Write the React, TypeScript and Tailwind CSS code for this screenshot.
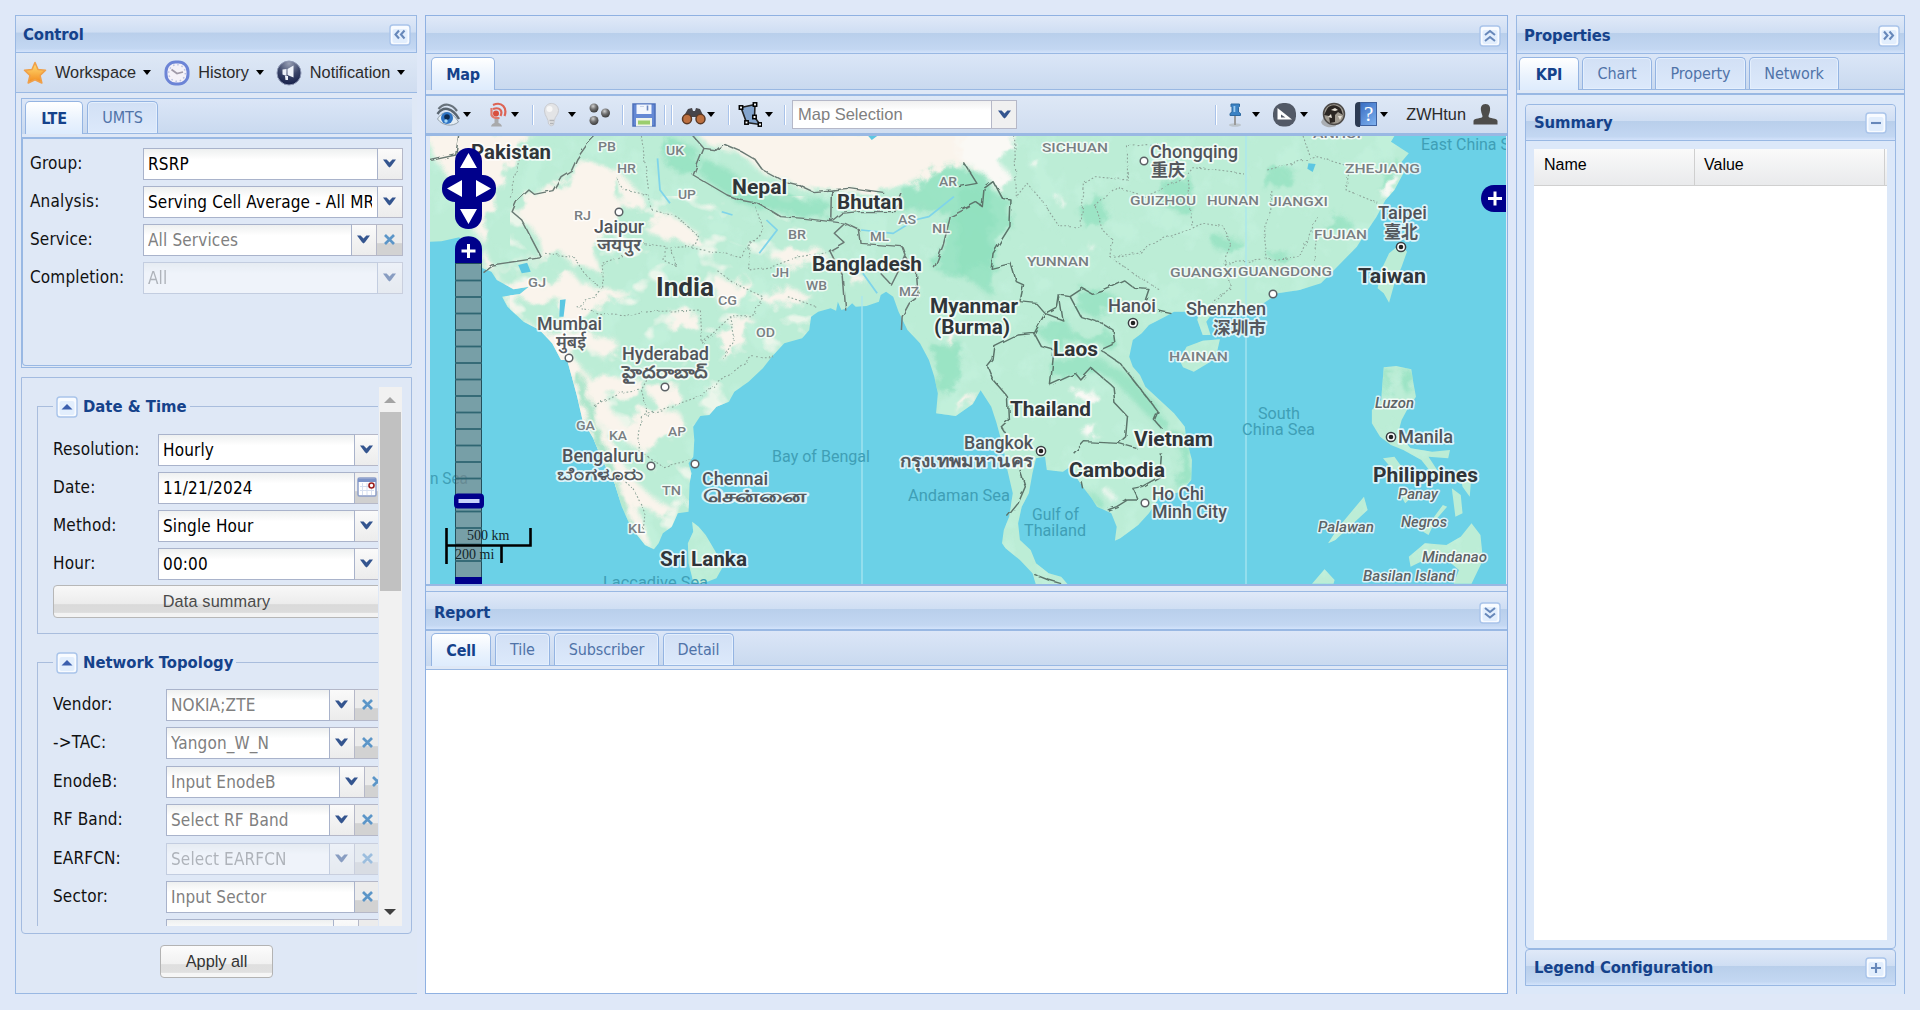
import React from "react";

const tahoma = "font-['DejaVu_Sans_Condensed','DejaVu_Sans',sans-serif]";
const arial = "font-['Liberation_Sans',Arial,sans-serif]";

function Caret() {
  return <span className="block h-0 w-0 shrink-0 border-x-[4.5px] border-t-[5px] border-x-transparent border-t-black" />;
}

function Chevron({ className = "" }: { className?: string }) {
  return (
    <svg width="13" height="9" viewBox="0 0 13 9" className={className}>
      <path d="M0 .5h3.6l2.9 3 2.9-3H13L8 7.3 6.5 8.5 5 7.3z" fill="#34558f" />
    </svg>
  );
}

function Tool({ kind }: { kind: "left" | "right" | "up" | "down" | "minus" | "plus" | "fold" }) {
  const paths: Record<string, React.ReactNode> = {
    left: <path d="M10 6.500 6.500 10.500l3.500 4M15.500 6.500 12 10.500l3.500 4" />,
    right: <path d="M6 6.500l3.500 4-3.500 4M11.500 6.500l3.500 4-3.500 4" />,
    up: <path d="M6 10l5-4 5 4M6 16l5-4 5 4" />,
    down: <path d="M6 6l5 4 5-4M6 11.500l5 4 5-4" />,
    minus: <path d="M6 11h10" />,
    plus: <path d="M6 11h10M11 6v10" />,
    fold: <path d="M5.500 13.500h11L11 8z" fill="#3b5fae" stroke="none" />,
  };
  return (
    <svg width="22" height="22" viewBox="0 0 22 22" className="shrink-0" fill="none" stroke="#6788ba" strokeWidth="2.1">
      <rect x="1" y="1" width="20" height="20" rx="3" fill="#f8fbff" stroke="#a9c4ea" strokeWidth="1.400" />
      <rect x="3.500" y="5" width="15" height="14" rx="2" fill="#e2eefd" stroke="none" />
      {paths[kind]}
    </svg>
  );
}

function Header({ title, tool, className = "" }: { title?: string; tool: React.ComponentProps<typeof Tool>["kind"]; className?: string }) {
  return (
    <div
      className={`flex shrink-0 items-center justify-between border border-[#99b8e3] bg-[linear-gradient(#e0e9f8_0%,#cfdef3_45%,#b9cfeb_47%,#c3d7f2_90%,#d3e3fb_100%)] ${className}`}
    >
      <span className={`${tahoma} pt-px text-[16.5px] font-bold tracking-[-0.1px] text-[#15428b]`}>{title}</span>
      <Tool kind={tool} />
    </div>
  );
}

function Tabs({ items, className = "", gap = "gap-[4px]" }: { items: { label: string; w: string }[]; className?: string; gap?: string }) {
  return (
    <div className={`shrink-0 bg-[linear-gradient(#dbe6f7,#c9d9ef)] ${className}`}>
      <div className={`flex h-full items-end border-b border-[#99b8e3] ${gap}`}>
        {items.map((t, i) => (
          <div
            key={t.label}
            className={`${tahoma} ${t.w} flex items-center justify-center rounded-t-[5px] border border-b-0 border-[#94b4e2] pt-px text-[16px] ${
              i === 0
                ? "relative top-px h-[33px] bg-[linear-gradient(#ffffff,#e9f2fd_60%,#deecfd)] font-bold tracking-[-0.2px] text-[#15428b]"
                : "h-[32px] bg-[linear-gradient(#d2e0f5,#dce9fb)] tracking-[-0.1px] text-[#5073a8] shadow-[inset_0_0_0_1px_#e4effd]"
            }`}
          >
            {t.label}
          </div>
        ))}
      </div>
    </div>
  );
}

function Clear() {
  return (
    <span className="flex h-8 w-[26px] shrink-0 items-start justify-center border-y border-r border-[#b5b8c8] bg-[linear-gradient(#ececec_60%,#d2d2d2_62%)] pr-px pt-[9px]">
      <svg width="11" height="11" viewBox="0 0 11 11" fill="none" stroke="#5c96c8" strokeWidth="2.700">
        <path d="M1 1l9 9M10 1l-9 9" />
      </svg>
    </span>
  );
}

function Calendar() {
  return (
    <span className="flex h-8 w-[26px] shrink-0 items-center border-y border-[#b5b8c8] bg-[linear-gradient(#efefef_60%,#d0d0d0_62%)] pb-[2px] pl-[2px]">
      <svg width="20" height="20" viewBox="0 0 20 20">
        <rect x="1" y="1" width="18" height="18" rx="1.500" fill="#fff" stroke="#8d9fc9" strokeWidth="1.500" />
        <path d="M1 1.500h18V5H1z" fill="#7c93c8" />
        <path d="M3 9.500h14M3 13.500h14M5.500 6v12M10 6v12M14.500 6v12" stroke="#d6dff0" />
        <circle cx="14.500" cy="8.500" r="2.500" fill="#fff" stroke="#9c1f1f" strokeWidth="1.600" />
      </svg>
    </span>
  );
}

type Field = {
  label: string;
  value: string;
  w: string;
  lw: string;
  muted?: boolean;
  disabled?: boolean;
  arrow?: boolean;
  clear?: boolean;
  calendar?: boolean;
  mb?: string;
};

function Row({ label, value, w, lw, muted, disabled, arrow = true, clear, calendar, mb = "mb-[6px]" }: Field) {
  return (
    <div className={`${tahoma} ${mb} flex h-8 items-center text-[17px] tracking-[0.15px]`}>
      <span className={`${lw} shrink-0 text-[#111]`}>{label}</span>
      <div className={`flex ${disabled ? "opacity-50" : ""}`}>
        <div
          className={`${w} h-8 shrink-0 border border-[#a9b3cb] bg-[linear-gradient(#eef0f0,#ffffff_35%)] pl-[4px] pr-[5px] leading-[30px] ${
            muted ? "text-[#808080]" : "text-black"
          }`}
        >
          <span className="block overflow-hidden whitespace-nowrap">{value || "\u00a0"}</span>
        </div>
        {arrow && !calendar && (
          <span className="flex h-8 w-[25px] shrink-0 items-center justify-center border-y border-r border-[#b5b8c8] bg-[linear-gradient(#fafafa,#ececec)] pb-px pr-px">
            <Chevron />
          </span>
        )}
        {calendar && <Calendar />}
        {clear && <Clear />}
      </div>
    </div>
  );
}

function Fieldset({ title, className, children }: { title: string; className: string; children: React.ReactNode }) {
  return (
    <div className={`relative shrink-0 border border-r-0 border-[#a9bddd] pl-[15px] ${className}`}>
      <div className="absolute -top-[11px] left-[15px] flex items-center gap-[5px] bg-[#dfe8f6] px-[3px]">
        <Tool kind="fold" />
        <span className={`${tahoma} text-[16.5px] font-bold leading-[22px] text-[#15428b]`}>{title}</span>
      </div>
      {children}
    </div>
  );
}

function Star() {
  return (
    <svg width="24" height="24" viewBox="0 0 24 24">
      <defs>
        <linearGradient id="star" x1="0" y1="0" x2="0" y2="1">
          <stop offset="0" stopColor="#ffe27a" />
          <stop offset="1" stopColor="#f38a1d" />
        </linearGradient>
      </defs>
      <path d="M12 1.500l3 7 7.500.7-5.500 5.300 1.800 7.500-6.800-3.300L5.200 22 7 14.500 1.500 9.200 9 8.500z" fill="url(#star)" stroke="#efa04a" strokeWidth="1.600" strokeLinejoin="round" />
    </svg>
  );
}

function Clock() {
  return (
    <svg width="26" height="26" viewBox="0 0 26 26">
      <rect x="2" y="2" width="22" height="22" rx="9.500" fill="#f4f1f8" stroke="#6c84d6" strokeWidth="3" />
      <circle cx="13" cy="13" r="8.300" fill="none" stroke="#b9c0e0" strokeDasharray="1.500 2.850" strokeWidth="1.500" />
      <path d="M7.500 9.500l5.500 4 6-1.500" fill="none" stroke="#a09aa8" strokeWidth="1.800" />
    </svg>
  );
}

function Horn() {
  return (
    <svg width="26" height="26" viewBox="0 0 26 26">
      <defs>
        <radialGradient id="horn" cx=".5" cy=".1" r=".9">
          <stop offset="0" stopColor="#98a0b5" />
          <stop offset=".55" stopColor="#3a4468" />
          <stop offset="1" stopColor="#16204a" />
        </radialGradient>
      </defs>
      <circle cx="13" cy="13" r="12" fill="url(#horn)" stroke="#8f99b5" />
      <path d="M6.500 9.500l4-.5v7l-4-1.500zM11.500 9l6-3.500v12L11.500 15zM9 16h3v4H9.500z" fill="#eef2fa" />
    </svg>
  );
}

function MenuItem({ icon, label, className = "" }: { icon: React.ReactNode; label: string; className?: string }) {
  return (
    <div className={`flex items-center ${className}`}>
      {icon}
      <span className={`${arial} ml-[8px] mr-[7px] text-[16.300px] text-[#2b2b2b]`}>{label}</span>
      <Caret />
    </div>
  );
}

const iconSvg = { width: 26, height: 26, viewBox: "0 0 26 26" };

function Eye() {
  return (
    <svg {...iconSvg} fill="none">
      <path d="M2.500 7C8 0 16 2 21 9" stroke="#68727c" strokeWidth="2.200" />
      <path d="M1.500 12C7 4 16 5 23 17" stroke="#5a6570" strokeWidth="2.400" />
      <path d="M1.500 17c5-9 14-9 21 3-6 5-16 4-21-3z" fill="#e4edf4" stroke="#93a0ab" />
      <circle cx="11" cy="16" r="6" fill="#2f74c4" />
      <circle cx="11" cy="15" r="2.800" fill="#0e2a50" />
      <circle cx="10" cy="19" r="1.700" fill="#a9daf7" />
    </svg>
  );
}

function Antenna() {
  return (
    <svg {...iconSvg} fill="none">
      <path d="M6 3c9-4 14.500 3 11.500 11M6 7c7-2.500 10 2 7.500 7" stroke="#dd6455" strokeWidth="2.200" />
      <circle cx="9" cy="11.500" r="3" fill="#d8503f" />
      <path d="M4.500 6v7c1 2 4 3.500 8 3" stroke="#e07a6c" strokeWidth="2.200" />
      <path d="M7.500 17h4v4c2 .5 3 1.500 3.500 3.500H4C4.500 22.500 5.500 21.500 7.500 21z" fill="#a9aaac" />
    </svg>
  );
}

function Bulb() {
  return (
    <svg {...iconSvg}>
      <path d="M3.500 9C3.500-1 17-1 17.500 8.500c0 4-3.500 6-4 9.500l-1 5-2.500 1-2.500-2C8 17 3.500 14 3.500 9z" fill="#e3e4e6" stroke="#c9cbd0" />
      <circle cx="8.500" cy="7" r="3" fill="#f7f7f7" />
      <path d="M8.500 18.500h4.500M9 21.500h3.500" stroke="#b2b4b8" strokeWidth="1.500" />
    </svg>
  );
}

function Balls() {
  return (
    <svg {...iconSvg}>
      <defs>
        <radialGradient id="ball" cx=".4" cy=".3" r=".7">
          <stop offset="0" stopColor="#d0d0d0" />
          <stop offset=".5" stopColor="#707070" />
          <stop offset="1" stopColor="#3c3c3c" />
        </radialGradient>
      </defs>
      <circle cx="8" cy="6" r="4.500" fill="url(#ball)" />
      <circle cx="19.500" cy="11" r="4.500" fill="url(#ball)" />
      <circle cx="8" cy="18.500" r="4.500" fill="url(#ball)" />
    </svg>
  );
}

function Floppy() {
  return (
    <svg {...iconSvg}>
      <rect x="2" y="2" width="22" height="22" fill="#6488d4" stroke="#4e70ba" strokeWidth="1.500" />
      <rect x="5.500" y="2.500" width="15" height="9.500" fill="#f2f6fd" />
      <path d="M16.500 3.500v5" stroke="#6a86c0" strokeWidth="1.600" />
      <path d="M9 4.500h4" stroke="#c9d3e8" />
      <rect x="5" y="16" width="16" height="8.500" fill="#eef3ea" />
      <path d="M7 18.500h12v4H7z" fill="#9bce6e" />
    </svg>
  );
}

function Binoculars() {
  return (
    <svg {...iconSvg}>
      <path d="M7 7l4-1 1 3h2l1-3 4 1 5 10-7 2-2-4h-4l-3 4-7-2z" fill="#46444a" />
      <ellipse cx="6" cy="17" rx="4.500" ry="4.700" fill="#bd7040" stroke="#5b3a26" strokeWidth="1.500" />
      <ellipse cx="19.500" cy="17" rx="4.500" ry="4.700" fill="#bd7040" stroke="#5b3a26" strokeWidth="1.500" />
    </svg>
  );
}

function Polygon() {
  return (
    <svg width="26" height="26" viewBox="0 0 26 26">
      <path d="M5 5.500L19 2.500l-.5 12.500L24 22.500 10.500 20.500z" fill="#84a5ce" stroke="#222" strokeWidth="1.600" />
      {[[5, 5.5], [19, 2.5], [18.5, 15], [24, 22.5], [10.5, 20.5]].map(([x, y]) => (
        <rect key={x} x={x - 1.7} y={y - 1.7} width="3.400" height="3.400" fill="#fff" stroke="#000" strokeWidth="1.500" />
      ))}
    </svg>
  );
}

function Pin() {
  return (
    <svg {...iconSvg}>
      <ellipse cx="13" cy="23" rx="6" ry="1.800" fill="#bcc5cc" />
      <path d="M12 13h2v10h-2z" fill="#9a9a9a" />
      <path d="M9 2h8.500v2.500l-1 1v4.500l2 1.500v2H8V11.500L10 10V5.500l-1-1z" fill="#3b82c4" stroke="#2c689f" />
      <path d="M11.500 4h1.800v6h-1.800z" fill="#9ccbf0" />
    </svg>
  );
}

function Ruler() {
  return (
    <svg {...iconSvg}>
      <rect x="1" y="1" width="23" height="23.500" rx="10" fill="#525966" />
      <path d="M5.500 6v11.500H20zM9 12.500l4.500 3H9z" fill="#fff" fillRule="evenodd" />
    </svg>
  );
}

function Globe() {
  return (
    <svg {...iconSvg}>
      <path d="M1 20c2 6 11 6 15 4l2-7L4 15z" fill="#aaaeb3" />
      <circle cx="14" cy="12" r="10.500" fill="#a09a90" stroke="#4d4a48" strokeWidth="1.500" />
      <path d="M7 7c3-5 10-5 14 0l2 6-5-3-3 3v7l-5 1-1-7-5-1z" fill="#2b2623" />
      <path d="M11 8l4-2 3 2-3 1zM8 15l3-3 1 4zM18 14l4 0-2 4z" fill="#e6e1d6" />
    </svg>
  );
}

function Help() {
  return (
    <div className="flex h-[25px] w-[22px]">
      <span className="h-[25px] w-[5px] rounded-l-sm bg-[#2d3b52]" />
      <span className="flex h-[24px] w-[17px] items-center justify-center border border-[#3f62a0] bg-[linear-gradient(135deg,#3a6fc4,#7fb1ee)] font-['Liberation_Serif',serif] text-[21px] leading-none text-white">
        ?
      </span>
    </div>
  );
}

function User() {
  return (
    <svg width="26" height="24" viewBox="0 0 26 24">
      <path d="M12.500 1c4 0 5 3 4.500 6.500-.3 3-1.500 4-1.500 6 .3 2 9 1.500 9 4.500v3.500H.5V18c0-3 9-2.500 9-4.500 0-2-1.200-3-1.500-6C7.500 4 8.500 1 12.500 1z" fill="#4e4d4b" />
    </svg>
  );
}

function Sep({ className = "" }: { className?: string }) {
  return <span className={`h-[20px] w-[2px] shrink-0 border-l border-[#a9c3ea] bg-white ${className}`} />;
}

const WEST =
  "M0 336L60 334 110 322 175 415 200 425 215 450 262 478 305 470 280 492 230 500 245 530 290 575 335 600 370 640 395 690 412 690 425 740 440 800 455 870 485 925 510 990 545 1060 565 1130 590 1190 630 1245 655 1258 668 1240 680 1210 705 1190 722 1150 752 1145 755 1060 760 1030 752 1000 765 980 768 930 765 890 785 858 810 855 830 830 865 815 880 785 920 755 960 715 985 680 1020 640 1070 625 1090 600 1095 560 1115 545 1150 535 1165 542 1170 515 1180 540 1195 535 1210 520 1220 530 1250 528 1285 515 1290 495 1305 485 1325 500 1340 545 1365 600 1400 640 1425 690 1440 740 1450 790 1445 850 1500 858 1548 822 1570 780 1600 780 1600 0 0 0zM762 1175L780 1190 800 1215 830 1270 848 1310 830 1345 790 1361 765 1355 752 1300 750 1240 765 1205z";
const EAST =
  "M0 0L1225 0 1205 35 1255 70 1235 95 1240 130 1215 180 1190 210 1165 260 1140 300 1110 350 1065 400 1010 460 950 480 890 490 850 520 800 540 740 540 700 560 690 575 702 615 680 615 665 570 670 545 600 545 575 560 530 585 510 610 485 630 475 680 485 710 505 735 520 770 560 810 600 850 630 890 635 930 650 990 648 1050 620 1085 560 1100 530 1150 500 1185 450 1225 435 1232 440 1190 425 1150 385 1130 370 1105 345 1070 320 1030 310 1010 290 1025 245 1020 240 980 215 985 205 1030 195 1090 175 1130 165 1180 170 1230 200 1260 215 1300 250 1330 285 1340 305 1365 215 1365 205 1330 170 1290 130 1255 120 1240 125 1200 140 1160 150 1090 135 1020 125 960 105 880 90 830 60 780 35 820 0 830zM615 690L635 650 680 632 728 628 720 665 695 700 655 725 625 712zM1232 342L1250 365 1235 410 1215 460 1200 518 1185 490 1168 475 1178 420 1200 370zM1185 712L1220 708 1262 718 1268 760 1275 800 1250 840 1235 870 1225 910 1260 955 1320 965 1370 960 1365 985 1310 980 1340 1030 1330 1045 1290 990 1240 960 1205 945 1175 920 1152 880 1152 840 1178 810zM1183 985L1215 980 1235 1010 1215 1025zM1130 1100L1140 1140 1105 1175 1050 1230 1030 1240 1060 1190zM1225 1080L1275 1090 1245 1120zM1350 1125L1362 1130 1330 1170 1310 1215 1295 1205zM1375 1075L1400 1095 1405 1150 1385 1160zM1395 1020L1430 1035 1425 1100 1405 1070zM1430 1180L1455 1215 1462 1290 1430 1361 1380 1361 1395 1320 1340 1270 1280 1300 1260 1310 1255 1280 1300 1240 1360 1245 1400 1220zM985 1361L1020 1318 1048 1350 1045 1361z";

const SAND =
  "M0 0L300 0 250 120 200 230 170 300 180 415 210 420 300 395 340 380 330 330 300 280 260 240 300 185 380 180 440 90 520 110 560 120 540 190 580 230 540 290 480 350 510 430 420 400 400 370 300 400 210 425 220 455 270 475 300 440 340 470 420 420 450 460 500 480 600 490 500 530 480 560 430 600 390 560 400 510 330 520 230 500 260 540 330 600 390 600 480 610 560 640 520 690 450 640 410 650 470 740 560 740 640 760 600 800 500 810 490 760 560 880 640 830 730 850 740 890 690 940 620 960 560 930 500 880 460 890 460 850 520 900 600 1050 650 1100 720 1140 660 1150 600 1120 650 1250 620 1235 600 1190zM545 110L600 170 640 220 580 240zM640 270L700 250 780 310 780 350 690 330 640 310zM820 430L880 460 930 450 900 520 840 530zM930 500L1030 470 1100 500 1030 525 970 515zM860 570L930 560 900 640 840 690zM970 380L1100 350 1150 380 1040 410zM640 780L720 760 730 820 660 840zM680 560L770 540 760 590 700 600zM770 0L1600 0 1600 90 1480 110 1350 170 1240 190 1100 185 960 130 900 70 800 40zM1210 430L1250 440 1220 480zM1480 560L1510 600 1490 660 1475 640zM1500 850L1560 780 1545 830z";

const DARK =
  "M1360 185L1440 120 1530 110 1600 140 1600 500 1540 450 1440 420 1465 340 1480 240 1420 245 1330 240zM780 80L850 110 950 190 1140 210 1140 265 1000 250 880 210 790 140zM700 18L780 60 770 130 700 120 670 60zM1440 640L1520 640 1500 780 1450 790zM430 740L445 720 520 960 600 1200 560 1120 500 980z";
const DARK_E =
  "M0 190L70 170 140 210 145 290 90 380 95 415 60 400 20 440 0 440zM320 490L400 470 460 520 380 560 330 540zM210 600L290 560 330 620 420 600 440 650 380 640 250 640zM260 690L380 680 470 730 560 830 570 900 520 850 430 750 380 720 260 750zM860 130L930 110 920 160 850 175zM1180 110L1230 90 1225 160 1180 190zM1000 290L1060 250 1110 290 1050 300zM860 380L920 360 900 400zM590 150L640 130 650 250 560 230zM330 240L400 200 420 260 350 290zM700 320L790 330 780 380 720 360zM1190 715L1205 715 1195 800 1185 790zM1225 715L1262 720 1265 800 1240 780zM590 900L640 920 640 1060 600 1070 620 980zM320 1080L390 1100 400 1130 350 1100z";
const WHITE_E =
  "M0 0L150 0 155 60 110 90 150 150 100 175 60 120 20 100 0 80zM265 195L290 205 275 220zM200 90L225 95 215 120zM325 780L385 790 380 820 330 810zM350 885L390 890 365 925 345 910zM365 345L385 355 370 365zM1220 135L1235 155 1200 205 1178 200 1190 170zM410 1085L440 1095 420 1110z";
const BORDERS_W =
  "M28 92L100 75 108 18M175 425L200 405 340 383 285 270 258 245 270 215 305 180 320 193 372 182 395 140 425 120 440 85 470 40 490 18M765 18L795 55 765 135 860 195 895 210 945 220 980 240 1010 260 1075 265 1150 275 1152 180 1100 185 1060 165 1020 155 960 120 940 90 900 65 850 42 830 60 795 55M1152 275L1190 280 1160 310 1190 340 1150 365 1185 440 1192 542M1190 280L1230 300 1235 340 1350 350 1360 380 1320 465 1290 430M1150 275L1180 250 1230 245 1330 245 1350 190M1360 380L1390 430 1395 500 1370 520 1350 560 1348 600M1440 415L1465 345 1485 260 1540 230M1152 180L1200 175 1300 190";
const BORDERS_E =
  "M0 240L45 215 65 230 70 175 95 155 120 205 145 210 142 290 95 370 90 415 145 400 160 455 180 465 170 515 215 520 240 550 275 530 280 495 310 500 345 475 370 490 400 480 460 450 490 475 530 478 520 510M310 500L340 560 400 580 430 600 435 640 395 660 450 700 530 810 555 845 545 870 565 895M240 550L290 570 280 500M240 550L210 610 165 615 100 650 95 690 80 710 95 750 135 800 138 870 118 890 130 910M210 610L230 650 265 660 255 765 325 730 340 750 370 715 430 770 435 820 470 860 465 920 445 940 350 935 320 970M445 940L495 955M565 970L560 1040 510 1070 485 1075 500 1110 470 1110 440 1130 415 1140M170 1020L185 1070 165 1120 135 1160M340 1050L345 1075M555 540L590 548M210 1333L250 1350 285 1361M15 100L50 160 0 170";
const STATES_W =
  "M545 140L570 180 640 195 650 240 720 260 780 320 770 345 700 350 720 410 680 390 690 350 620 340 560 380 510 400 515 480 440 530 500 550 590 555 640 545 785 540 790 640M790 640L870 560 930 560 960 500 880 460 830 420M940 230L960 300 925 340 920 420 985 410 1060 380 1160 365M870 560L880 620 850 690M640 860L620 780 640 740M490 830L560 790 620 780M620 860L780 800 860 740 930 680 990 680M620 860L610 960 680 1010 760 990M560 1040L600 1080 630 1150 625 1200M350 370L430 380 460 430 490 460 515 480M250 200L280 80M620 18L640 180M1030 500L1110 530M740 350L900 380 960 300";
const STATES_E =
  "M155 18L160 200 190 160 230 210 280 290 340 290 350 160 380 140 470 150 470 50 560 40M380 230L440 170 520 200 620 150 650 110 800 130M380 230L400 300 430 330 420 380 500 370 560 330 640 300 680 280 740 290 760 350 740 400 850 390M640 150L650 290M870 180L870 240 850 300 860 390 950 380 1000 260M860 120L1000 80 1090 110 1080 180 1170 220M960 18L980 80M740 400L760 470 710 520M420 380L500 440 560 480M990 390L1000 300";

type Label = [string, number, number, number, ("c" | "t" | "n" | "p" | "s" | "i" | "big")?];
/* text, left, baseline, width, style */
const LABELS: Label[] = [
  ["Pakistan", 41, 23, 80, "c"], ["Nepal", 302, 58, 55, "c"], ["Bhutan", 407, 73, 66, "c"],
  ["Bangladesh", 382, 135, 110, "c"], ["India", 226, 160, 58, "big"], ["Myanmar", 500, 177, 88, "c"],
  ["(Burma)", 504, 198, 76, "c"], ["Sri Lanka", 230, 430, 87, "c"], ["Laos", 623, 220, 45, "c"],
  ["Thailand", 580, 280, 81, "c"], ["Vietnam", 704, 310, 79, "c"], ["Cambodia", 639, 341, 96, "c"],
  ["Taiwan", 928, 147, 68, "c"], ["Philippines", 943, 346, 105, "c"],
  ["Jaipur", 164, 97, 50, "t"], ["जयपुर", 167, 115, 44, "n"], ["Mumbai", 107, 194, 65, "t"], ["मुंबई", 126, 212, 30, "n"],
  ["Hyderabad", 192, 224, 87, "t"], ["హైదరాబాద్", 192, 242, 86, "n"], ["Bengaluru", 132, 326, 82, "t"],
  ["ಬೆಂಗಳೂರು", 127, 344, 86, "n"], ["Chennai", 272, 349, 66, "t"], ["சென்னை", 273, 366, 103, "n"],
  ["Bangkok", 534, 313, 69, "t"], ["กรุงเทพมหานคร", 470, 331, 133, "n"], ["Chongqing", 720, 22, 88, "t"],
  ["重庆", 721, 40, 34, "n"], ["Taipei", 948, 83, 49, "t"], ["臺北", 954, 102, 34, "n"], ["Hanoi", 678, 176, 48, "t"],
  ["Shenzhen", 756, 179, 80, "t"], ["深圳市", 783, 198, 53, "n"], ["Manila", 968, 307, 55, "t"],
  ["Ho Chi", 722, 364, 52, "t"], ["Minh City", 722, 382, 75, "t"],
  ["PB", 168, 15, 18, "p"], ["UK", 236, 19, 18, "p"], ["HR", 187, 37, 19, "p"], ["UP", 248, 63, 18, "p"], ["AR", 509, 50, 18, "p"],
  ["RJ", 144, 84, 17, "p"], ["BR", 358, 103, 18, "p"], ["ML", 440, 105, 19, "p"], ["AS", 468, 88, 18, "p"], ["NL", 502, 97, 18, "p"],
  ["CG", 288, 169, 19, "p"], ["JH", 342, 141, 17, "p"], ["WB", 376, 154, 21, "p"], ["MZ", 469, 160, 20, "p"], ["GJ", 98, 151, 18, "p"],
  ["OD", 326, 201, 19, "p"], ["GA", 146, 294, 19, "p"], ["KA", 179, 304, 18, "p"], ["AP", 238, 300, 18, "p"], ["TN", 232, 359, 19, "p"],
  ["KL", 198, 397, 17, "p"], ["SICHUAN", 612, 16, 66, "p"], ["ANHUI", 883, 2, 48, "p"], ["ZHEJIANG", 915, 37, 75, "p"],
  ["GUIZHOU", 700, 69, 66, "p"], ["HUNAN", 777, 69, 52, "p"], ["JIANGXI", 839, 70, 59, "p"], ["FUJIAN", 884, 103, 53, "p"],
  ["YUNNAN", 597, 130, 62, "p"], ["GUANGXI", 740, 141, 67, "p"], ["GUANGDONG", 808, 140, 94, "p"], ["HAINAN", 739, 225, 59, "p"],
  ["Laccadive Sea", 173, 452, 105, "s"], ["Bay of Bengal", 342, 326, 98, "s"], ["Andaman Sea", 478, 365, 102, "s"],
  ["n Sea", 0, 348, 38, "s"], ["South", 828, 283, 42, "s"], ["China Sea", 812, 299, 73, "s"], ["Gulf of", 602, 384, 47, "s"],
  ["Thailand", 594, 400, 62, "s"], ["East China Sea", 991, 14, 106, "s"],
  ["Luzon", 945, 272, 39, "i"], ["Panay", 968, 363, 40, "i"], ["Negros", 971, 391, 46, "i"], ["Palawan", 888, 396, 56, "i"],
  ["Mindanao", 992, 426, 65, "i"], ["Basilan Island", 933, 445, 92, "i"],
];

const LABEL_STYLE = {
  c: "text-[19.5px] font-bold fill-[#303539] stroke-white stroke-[3.500px]",
  big: "text-[26px] font-bold fill-[#303539] stroke-white stroke-[3.500px]",
  t: "text-[17.5px] font-medium fill-[#50545a] stroke-white stroke-[3.500px]",
  n: "text-[17px] font-semibold fill-[#55595e] stroke-white stroke-[3.500px]",
  p: "text-[13px] font-medium fill-[#797f83] stroke-white stroke-[3px]",
  s: "text-[16.5px] fill-[#3f9fb6] stroke-transparent",
  i: "text-[15px] font-medium italic fill-[#5d6467] stroke-white stroke-[3px]",
};

function MapView() {
  const tw = "translate(-10 -6) scale(.35714 .33333)";
  const te = "translate(529 -6) scale(.3584 .33333)";
  return (
    <svg width="1076" height="448" viewBox="0 0 1076 448" className="block">
      <defs>
        <clipPath id="land">
          <path d={WEST} transform={tw} />
          <path d={EAST} transform={te} />
        </clipPath>
        <filter id="soft" x="-5%" y="-5%" width="110%" height="110%">
          <feGaussianBlur stdDeviation="6" result="b" />
          <feTurbulence type="fractalNoise" baseFrequency=".02" numOctaves="3" seed="4" result="n" />
          <feDisplacementMap in="b" in2="n" scale="55" />
        </filter>
        <filter id="green" x="0" y="0" width="100%" height="100%">
          <feTurbulence type="fractalNoise" baseFrequency=".035 .028" numOctaves="4" seed="11" />
          <feColorMatrix values="0 0 0 0 .56  0 0 0 0 .89  0 0 0 0 .74  5 0 0 0 -2.600" />
        </filter>
        <filter id="sand" x="0" y="0" width="100%" height="100%">
          <feTurbulence type="fractalNoise" baseFrequency=".03 .04" numOctaves="3" seed="23" />
          <feColorMatrix values="0 0 0 0 .96  0 0 0 0 .94  0 0 0 0 .88  0 7 0 0 -4.300" />
        </filter>
        <filter id="rough" x="-2%" y="-2%" width="104%" height="104%">
          <feTurbulence type="fractalNoise" baseFrequency=".03" numOctaves="2" seed="3" result="n" />
          <feDisplacementMap in="SourceGraphic" in2="n" scale="14" />
        </filter>
      </defs>
      <rect width="1076" height="448" fill="#6bd1e7" />
      <g clipPath="url(#land)">
        <rect width="1076" height="448" fill="#bcedd6" />
        <rect width="1076" height="448" filter="url(#green)" opacity=".55" />
        <rect x="80" y="60" width="310" height="360" filter="url(#sand)" opacity=".75" />
        <g transform={tw}>
          <path d={SAND} fill="#faf4ec" filter="url(#soft)" />
          <path d={DARK} fill="#8fe0be" opacity=".75" filter="url(#soft)" />
        </g>
        <g transform={te}>
          <path d={DARK_E} fill="#8fe0be" opacity=".7" filter="url(#soft)" />
          <path d={WHITE_E} fill="#faf9f5" filter="url(#soft)" />
        </g>
      </g>
      <g transform={tw} fill="none" strokeLinejoin="round">
        <path d="M275 405L300 398 310 425 285 430zM392 510L408 508 402 560 390 560zM1255 18L1280 18 1265 30z" fill="#5cc7e2" />
        <path d="M665 85L672 180 700 220M845 245l30 10M950 370l50-70-30-30M1235 300l90 10 60-40 40-10 70-60M1240 430l40 60" stroke="#7fd4ea" strokeWidth="5" />
        <path d={STATES_W} stroke="#8da59a" strokeWidth="3.200" strokeDasharray="5 6" filter="url(#rough)" />
        <path d={BORDERS_W} stroke="#6a7a74" strokeWidth="4.200" filter="url(#rough)" />
      </g>
      <g transform={te} fill="none" strokeLinejoin="round">
        <path d="M975 100l20 2-8 24-15-10z" fill="#5cc7e2" />
        <path d={STATES_E} stroke="#8da59a" strokeWidth="3.200" strokeDasharray="5 6" filter="url(#rough)" />
        <path d={BORDERS_E} stroke="#5c756b" strokeWidth="4.200" filter="url(#rough)" />
      </g>
      <path d="M432 160v288M816 0v448" stroke="#a8e6f0" strokeWidth="1.300" />
      {[[189, 76], [139, 222], [235, 251], [221, 330], [265, 328], [714, 25], [843, 158], [715, 367]].map(([x, y]) => (
        <circle key={x} cx={x} cy={y} r="3.800" fill="#fff" stroke="#5b6065" strokeWidth="1.500" />
      ))}
      {[[611, 315], [971, 111], [703, 187], [961, 301]].map(([x, y]) => (
        <g key={x}>
          <circle cx={x} cy={y} r="4.600" fill="#fff" stroke="#3a3f43" strokeWidth="1.500" />
          <circle cx={x} cy={y} r="2.300" fill="#222" />
        </g>
      ))}
      {LABELS.map(([text, x, y, w, kind = "t"]) => (
        <text
          key={text + x}
          x={x}
          y={y}
          textLength={w}
          lengthAdjust="spacingAndGlyphs"
          paintOrder="stroke"
          strokeLinejoin="round"
          strokeOpacity=".75"
          className={`font-['Roboto','Noto_Sans','Noto_Sans_CJK_SC',sans-serif] ${LABEL_STYLE[kind]}`}
        >
          {text}
        </text>
      ))}
    </svg>
  );
}

function MapControls() {
  return (
    <>
      <svg className="absolute left-0 top-0" width="130" height="448" viewBox="0 0 130 448">
        <rect x="25" y="12" width="27" height="81" rx="13" fill="#00008b" />
        <rect x="12" y="39" width="54" height="27" rx="13" fill="#00008b" />
        <path d="M38.500 17l8.500 15H30zM38.500 88l8.500-15H30zM17 52.500l15-8.500v17zM61 52.500L46 44v17z" fill="#fff" />
        <path d="M25 127v-14c0-17 27-17 27 0v14z" fill="#00008b" />
        <path d="M38.500 108v14M31.500 115h14" stroke="#fff" strokeWidth="3" />
        <rect x="25.500" y="127.500" width="26" height="314" fill="#808080" fillOpacity=".62" stroke="#234f5b" />
        {Array.from({ length: 18 }, (_, i) => (
          <path key={i} d={`M25 ${144.5 + i * 16.5}h27`} stroke="#2f6672" strokeWidth="1.800" />
        ))}
        <rect x="25" y="441" width="27" height="7" fill="#00008b" />
        <rect x="26" y="359.500" width="26" height="11" rx="2" fill="#00008b" stroke="#00008b" strokeWidth="4" />
        <path d="M28.500 365h21" stroke="#c9d2fa" strokeWidth="4" />
        <path d="M16.500 392v36M100.500 392v17.500H16.500M71.500 409v18" stroke="#000" strokeWidth="2.600" fill="none" />
      </svg>
      <span className="absolute left-[37px] top-[392px] font-['Liberation_Serif',serif] text-[14px] leading-4 text-[#12252b]">500 km</span>
      <span className="absolute left-[25px] top-[411px] font-['Liberation_Serif',serif] text-[14px] leading-4 text-[#12252b]">200 mi</span>
      <svg className="absolute right-0 top-[49px]" width="25" height="27" viewBox="0 0 25 27">
        <path d="M25 0H13C-4.300 0-4.300 27 13 27h12z" fill="#00008b" />
        <path d="M14 6.500v14M7 13.500h14" stroke="#fff" strokeWidth="3" />
      </svg>
    </>
  );
}

function ControlPanel() {
  return (
    <section className="flex h-[979px] w-[402px] flex-col border-b border-l border-[#99b8e3] bg-[#dfe8f6]">
      <Header title="Control" tool="left" className="h-[38px] border-l-0 pl-[7px] pr-[5px] pt-[2px]" />
      <div className="flex h-[40px] shrink-0 items-center border-b border-[#99b8e3] bg-[linear-gradient(#dee8f6,#d0ddf0)] pl-[7px]">
        <MenuItem icon={<Star />} label="Workspace" />
        <MenuItem icon={<Clock />} label="History" className="ml-[13px]" />
        <MenuItem icon={<Horn />} label="Notification" className="ml-[12px]" />
      </div>
      <div className="ml-[5px] mt-[5px] flex h-[270px] w-[391px] shrink-0 flex-col border-y border-l border-[#99b8e3]">
        <Tabs className="h-[35px] pl-[3px]" items={[{ label: "LTE", w: "w-[58px]" }, { label: "UMTS", w: "w-[71px]" }]} />
        <div className="mb-[1px] mt-[3px] flex-1 rounded-b-[4px] border border-t-2 border-[#99b8e3] pl-[7px] pt-[9px]">
          <Row label="Group:" value="RSRP" w="w-[235px]" lw="w-[113px]" />
          <Row label="Analysis:" value="Serving Cell Average - All MR" w="w-[235px]" lw="w-[113px]" />
          <Row label="Service:" value="All Services" w="w-[209px]" lw="w-[113px]" muted clear />
          <Row label="Completion:" value="All" w="w-[235px]" lw="w-[113px]" muted disabled />
        </div>
      </div>
      <div className="ml-[5px] mt-[9px] flex h-[557px] w-[391px] shrink-0 rounded-b-[4px] border border-[#a3bbe0] pl-[15px] pt-[9px]">
        <div className="flex h-[539px] w-[341px] shrink-0 flex-col overflow-hidden">
          <Fieldset title="Date & Time" className="mt-[19px] h-[228px] pt-[27px]">
            <Row label="Resolution:" value="Hourly" w="w-[197px]" lw="w-[105px]" />
            <Row label="Date:" value="11/21/2024" w="w-[197px]" lw="w-[105px]" calendar />
            <Row label="Method:" value="Single Hour" w="w-[197px]" lw="w-[105px]" />
            <Row label="Hour:" value="00:00" w="w-[197px]" lw="w-[105px]" mb="mb-[5px]" />
            <button className={`${arial} h-[33px] w-[335px] rounded-[4px] border border-[#b7b7b7] bg-[linear-gradient(#f8f8f8_0%,#ececec_58%,#dadada_60%,#dcdcdc_85%,#f3f3f3_88%)] pr-[8px] text-[16.300px] tracking-[0.15px] text-[#4a4a4a]`}>
              Data summary
            </button>
          </Fieldset>
          <Fieldset title="Network Topology" className="mt-[28px] h-[400px] pt-[26px]">
            <Row label="Vendor:" value="NOKIA;ZTE" w="w-[164px]" lw="w-[113px]" muted clear mb="mb-[6px]" />
            <Row label="->TAC:" value="Yangon_W_N" w="w-[164px]" lw="w-[113px]" muted clear mb="mb-[7px]" />
            <Row label="EnodeB:" value="Input EnodeB" w="w-[174px]" lw="w-[113px]" muted clear mb="mb-[6px]" />
            <Row label="RF Band:" value="Select RF Band" w="w-[164px]" lw="w-[113px]" muted clear mb="mb-[7px]" />
            <Row label="EARFCN:" value="Select EARFCN" w="w-[164px]" lw="w-[113px]" muted disabled clear />
            <Row label="Sector:" value="Input Sector" w="w-[189px]" lw="w-[113px]" muted arrow={false} clear />
            <Row label="" value="" w="w-[168px]" lw="w-[113px]" clear />
          </Fieldset>
        </div>
        <div className="ml-px flex h-[539px] w-[23px] flex-col items-center justify-between bg-[#f1f1f1] pb-[11px] pr-px pt-[10px]">
          <span className="border-x-[6px] border-b-[6px] border-x-transparent border-b-[#a3a3a3]" />
          <span className="mb-auto mt-[9px] h-[179px] w-[21px] bg-[#c1c1c1]" />
          <span className="border-x-[6px] border-t-[6px] border-x-transparent border-t-[#404040]" />
        </div>
      </div>
      <button className={`${arial} ml-[144px] mt-[11px] h-[33px] w-[113px] rounded-[4px] border border-[#b3b3b3] bg-[linear-gradient(#fcfcfc_0%,#f1f1f1_58%,#dfdfdf_60%,#e0e0e0_85%,#f6f6f6_88%)] text-[16.300px] text-[#333]`}>
        Apply all
      </button>
    </section>
  );
}

function CenterPanel() {
  return (
    <section className="ml-[8px] flex h-[979px] w-[1083px] flex-col border border-[#8fb1e2] bg-[#dfe8f6]">
      <Header tool="up" className="h-[38px] border-x-0 border-t-0 pr-[6px] pt-[2px]" />
      <Tabs className="h-[36px] pl-[5px]" items={[{ label: "Map", w: "w-[64px]" }]} />
      <div className="mt-[4px] flex h-[42px] shrink-0 items-center border-y-2 border-b-[3px] border-[#99b8e3] bg-[linear-gradient(#dee8f6,#d0ddf0)] pl-[10px] pr-[8px]">
        <div className="flex w-[46px] items-center"><Eye /><span className="w-px" /><Caret /></div>
        <div className="ml-[5px] flex w-[45px] items-center"><Antenna /><span className="-ml-[2px]"><Caret /></span></div>
        <Sep />
        <div className="ml-[7px] flex w-[44px] items-center"><Bulb /><span className="w-[1px]" /><Caret /></div>
        <span className="ml-[1px]"><Balls /></span>
        <Sep className="ml-[10px] mr-[7px]" />
        <Floppy />
        <Sep className="ml-[7px]" /><Sep className="ml-[5px]" />
        <div className="ml-[8px] flex w-[47px] items-center"><Binoculars /><Caret /></div>
        <Sep />
        <div className="ml-[6px] flex w-[46px] items-center"><Polygon /><span className="w-[3px]" /><Caret /></div>
        <Sep className="ml-[2px]" />
        <div className={`${arial} ml-[6px] flex h-[29px] w-[225px] shrink-0 items-center border border-[#b5b8c8] bg-[linear-gradient(#f0f0f0,#ffffff_35%)] pl-[5px] text-[16.500px] text-[#808080]`}>
          <span className="flex-1">Map Selection</span>
          <span className="flex h-[27px] w-[25px] items-center justify-center border-l border-[#b5b8c8] bg-[#f0f0f0]"><Chevron /></span>
        </div>
        <Sep className="ml-auto mr-[5px]" />
        <div className="flex w-[50px] items-center"><Pin /><span className="w-[4px]" /><Caret /></div>
        <div className="flex w-[48px] items-center"><Ruler /><span className="w-[2px]" /><Caret /></div>
        <Globe />
        <div className="ml-[9px] flex w-[51px] items-center"><Help /><span className="w-[3px]" /><Caret /></div>
        <span className={`${arial} mr-[7px] text-[16.300px] text-[#2b2b2b]`}>ZWHtun</span>
        <User />
      </div>
      <div className="relative ml-[4px] h-[448px] w-[1076px] shrink-0 overflow-hidden">
        <MapView />
        <MapControls />
      </div>
      <div className="h-[7px] shrink-0 border-t-2 border-[#99b8e3]" />
      <Header title="Report" tool="down" className="h-[40px] border-x-0 border-b-2 pl-[8px] pr-[6px] pt-[4px]" />
      <Tabs
        className="h-[35px] pl-[5px] pt-px"
        items={[
          { label: "Cell", w: "w-[60px]" },
          { label: "Tile", w: "w-[55px]" },
          { label: "Subscriber", w: "w-[105px]" },
          { label: "Detail", w: "w-[71px]" },
        ]}
      />
      <div className="mt-[3px] flex-1 border-t border-[#99b8e3] bg-white" />
    </section>
  );
}

function PropertiesPanel() {
  return (
    <section className="ml-[8px] flex h-[979px] w-[389px] flex-col border border-[#99b8e3] bg-[#dfe8f6]">
      <Header title="Properties" tool="right" className="h-[38px] border-x-0 border-t-0 pl-[7px] pr-[4px] pt-[2px]" />
      <Tabs
        className="h-[36px] pl-[2px]"
        gap="gap-[3px]"
        items={[
          { label: "KPI", w: "w-[60px]" },
          { label: "Chart", w: "w-[70px]" },
          { label: "Property", w: "w-[91px]" },
          { label: "Network", w: "w-[90px]" },
        ]}
      />
      <div className="mt-[3px] flex flex-1 flex-col border-t-2 border-[#99b8e3] bg-[#dce8f9] px-[8px] pb-[8px] pt-[9px]">
        <div className="flex h-[845px] shrink-0 flex-col rounded-[4px] border border-[#99b8e3]">
          <Header title="Summary" tool="minus" className="h-[36px] rounded-t-[4px] border-x-0 border-t-0 pl-[8px] pr-[8px]" />
          <div className="mx-[8px] mb-[8px] mt-[8px] flex-1 bg-white">
            <div className={`${arial} flex h-[37px] border-b border-[#d0d0d0] bg-[linear-gradient(#fafafa,#e9eaec)] text-[16px] leading-[31px] text-black`}>
              <span className="w-[161px] border-r border-[#cfcfcf] pl-[10px]">Name</span>
              <span className="w-[190px] border-r border-[#cfcfcf] pl-[9px]">Value</span>
            </div>
          </div>
        </div>
        <Header title="Legend Configuration" tool="plus" className="h-[37px] rounded-t-[4px] pl-[8px] pr-[8px]" />
      </div>
    </section>
  );
}

export default function App() {
  return (
    <main className="flex h-[1010px] w-[1920px] overflow-hidden bg-[#dfe8f8] pl-[15px] pt-[15px]">
      <ControlPanel />
      <CenterPanel />
      <PropertiesPanel />
    </main>
  );
}
